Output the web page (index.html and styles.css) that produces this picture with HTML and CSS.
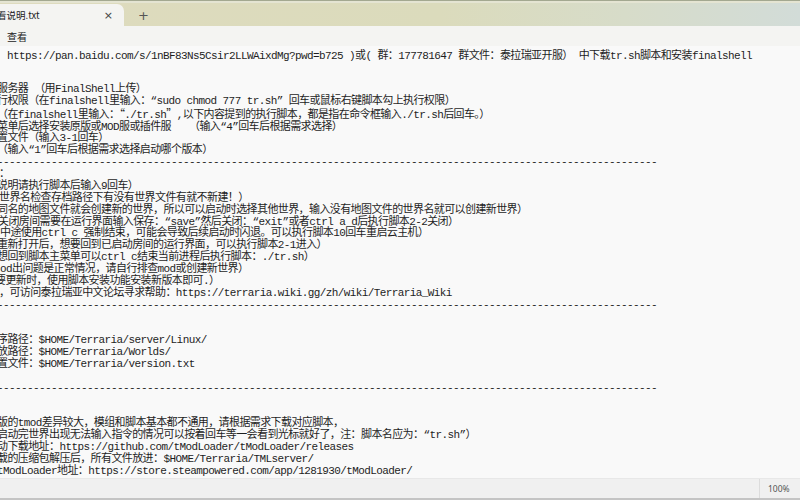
FILE: index.html
```html
<!DOCTYPE html>
<html lang="zh-CN">
<head>
<meta charset="utf-8">
<title>看说明.txt</title>
<link rel="stylesheet" href="styles.css">
</head>
<body>
<div class="window">
  <div class="titlebar">
    <div class="tab">
      <span class="tab-title">看说明.txt</span>
      <span class="tab-close">×</span>
    </div>
    <span class="tab-new">+</span>
  </div>
  <div class="menubar"><span class="menu-item">查看</span></div>
  <div class="text">
    <div class="first">https://pan.baidu.com/s/1nBF83Ns5Csir2LLWAixdMg?pwd=b725 )或( 群：177781647 群文件：泰拉瑞亚开服） 中下载tr.sh脚本和安装finalshell</div>
    <div class="ln">服务器 （用FinalShell上传）</div>
    <div class="ln">行权限（在finalshell里输入：“sudo chmod 777 tr.sh” 回车或鼠标右键脚本勾上执行权限）</div>
    <div class="ln">（在finalshell里输入：<span class="fw">“</span>./tr.sh<span class="fw">”</span>,以下内容提到的执行脚本，都是指在命令框输入./tr.sh后回车。）</div>
    <div class="ln">菜单后选择安装原版或MOD服或插件服   （输入“4”回车后根据需求选择）</div>
    <div class="ln">置文件（输入3-1回车）</div>
    <div class="ln">（输入“1”回车后根据需求选择启动哪个版本）</div>
    <div class="ln">--------------------------------------------------------------------------------------------------------------</div>
    <div class="ln l1">：</div>
    <div class="ln">说明请执行脚本后输入9回车）</div>
    <div class="ln l1">世界名检查存档路径下有没有世界文件有就不新建！）</div>
    <div class="ln">同名的地图文件就会创建新的世界，所以可以启动时选择其他世界，输入没有地图文件的世界名就可以创建新世界）</div>
    <div class="ln l2">关闭房间需要在运行界面输入保存：“save”然后关闭：“exit”或者ctrl a d后执行脚本2-2关闭）</div>
    <div class="ln l0">中途使用ctrl c 强制结束，可能会导致后续启动时闪退。可以执行脚本10回车重启云主机）</div>
    <div class="ln">重新打开后，想要回到已启动房间的运行界面，可以执行脚本2-1进入）</div>
    <div class="ln">想回到脚本主菜单可以ctrl c结束当前进程后执行脚本：./tr.sh）</div>
    <div class="ln l0">od出问题是正常情况，请自行排查mod或创建新世界）</div>
    <div class="ln l5">要更新时，使用脚本安装功能安装新版本即可.）</div>
    <div class="ln l1">，可访问泰拉瑞亚中文论坛寻求帮助：https://terraria.wiki.gg/zh/wiki/Terraria_Wiki</div>
    <div class="ln">--------------------------------------------------------------------------------------------------------------</div>
    <div class="blank"></div>
    <div class="blank"></div>
    <div class="ln">序路径：$HOME/Terraria/server/Linux/</div>
    <div class="ln">放路径：$HOME/Terraria/Worlds/</div>
    <div class="ln">置文件：$HOME/Terraria/version.txt</div>
    <div class="blank"></div>
    <div class="ln">--------------------------------------------------------------------------------------------------------------</div>
    <div class="blank"></div>
    <div class="blank"></div>
    <div class="ln">版的tmod差异较大，模组和脚本基本都不通用，请根据需求下载对应脚本，</div>
    <div class="ln">启动完世界出现无法输入指令的情况可以按着回车等一会看到光标就好了，注：脚本名应为：“tr.sh”）</div>
    <div class="ln">动下载地址：https://github.com/tModLoader/tModLoader/releases</div>
    <div class="ln">载的压缩包解压后，所有文件放进：$HOME/Terraria/TMLserver/</div>
    <div class="ln">tModLoader地址：https://store.steampowered.com/app/1281930/tModLoader/</div>
  </div>
  <div class="statusbar">
    <span class="zoom">100%</span>
  </div>
</div>
</body>
</html>
```

FILE: styles.css
```css
html, body {
  margin: 0;
  padding: 0;
}

body {
  width: 800px;
  height: 500px;
  overflow: hidden;
  font-family: "Noto Sans CJK SC", "Noto Sans", sans-serif;
  background: #f9f9f9;
}

.window {
  display: flex;
  flex-direction: column;
  width: 800px;
  height: 500px;
}

.titlebar {
  height: 25px;
  flex: none;
  display: flex;
  align-items: flex-end;
  border-top: 1px solid #a3a890;
  box-shadow: inset 0 2px 0 #e4e4d2;
  background: linear-gradient(to right, #dedbbe 0%, #dbdbbc 55%, #d7dcc9 78%, #d2dcd8 100%);
}

.tab {
  width: 124px;
  height: 22px;
  display: flex;
  align-items: center;
  background: #f4f4f2;
  border-radius: 0 7px 0 0;
}

.tab-title {
  margin-left: -3px;
  font-size: 9.5px;
  color: #222;
  white-space: nowrap;
}

.tab-close {
  margin-left: auto;
  margin-right: 11px;
  font-family: "DejaVu Sans", sans-serif;
  font-size: 11px;
  color: #444;
}

.tab-new {
  height: 22px;
  display: flex;
  align-items: center;
  margin-left: 14px;
  font-family: "DejaVu Sans", sans-serif;
  font-size: 13px;
  color: #555;
}

.menubar {
  height: 20px;
  flex: none;
  display: flex;
  align-items: center;
  background: #f4f4f2;
}

.menu-item {
  margin-left: 7px;
  font-size: 10px;
  color: #222;
}

.text {
  flex: 1;
  overflow: hidden;
  padding-top: 5px;
  background: #f9f9f9;
  color: #1e1e1e;
  font-family: "Liberation Mono", "Noto Sans CJK SC", monospace;
  font-size: 11px;
  letter-spacing: -0.6px;
  line-height: 11.875px;
}

.first {
  margin-left: 7px;
  margin-bottom: 21px;
  white-space: pre;
}

.ln {
  margin-left: -3px;
  white-space: pre;
}

.ln.l0 { margin-left: 0; }
.ln.l1 { margin-left: -1px; }
.ln.l2 { margin-left: -2px; }
.ln.l5 { margin-left: -5px; }

.blank {
  height: 11.875px;
}

.fw {
  font-family: "Noto Sans CJK SC", sans-serif;
  font-feature-settings: "fwid" 1;
}

.statusbar {
  height: 19px;
  flex: none;
  display: flex;
  justify-content: flex-end;
  align-items: center;
  background: #f0f0f0;
  border-top: 1px solid #e8e8e8;
  border-bottom: 2px solid #c4c4c4;
}

.zoom {
  width: 32px;
  height: 19px;
  padding-left: 8px;
  display: flex;
  align-items: center;
  border-left: 1px solid #dcdcdc;
  font-family: "Noto Sans", sans-serif;
  font-size: 8.5px;
  color: #555;
}
```
